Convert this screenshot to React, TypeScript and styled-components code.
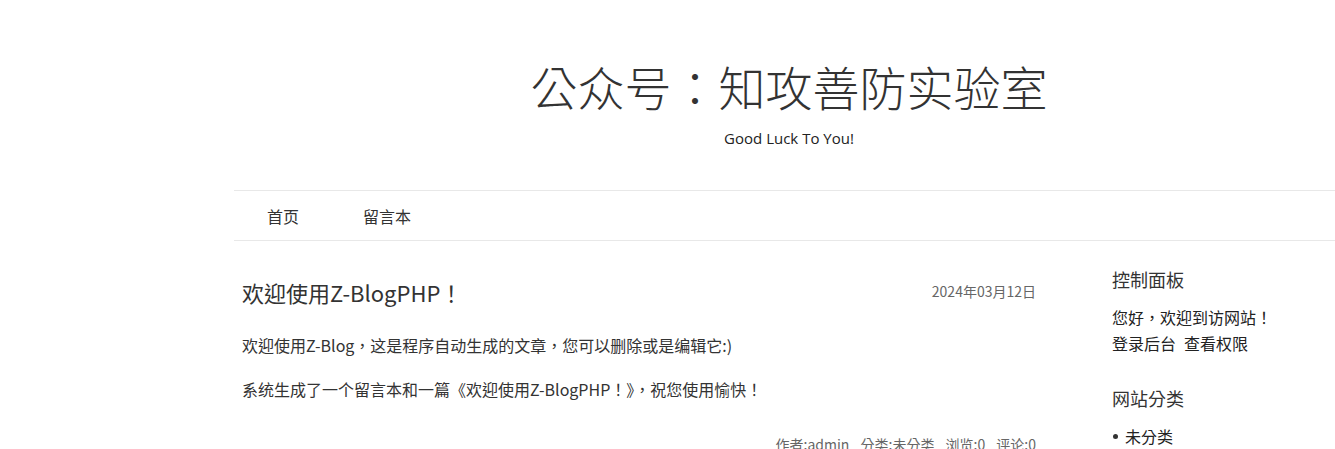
import React from "react";
import styled, { createGlobalStyle } from "styled-components";

const CJK = `"Noto Sans CJK TC", "Noto Sans CJK SC", sans-serif`;

const GlobalStyle = createGlobalStyle`
  html, body {
    margin: 0;
    padding: 0;
    background: #fff;
    overflow-x: hidden;
  }
  body {
    font-family: "Open Sans", "Noto Sans CJK TC", sans-serif;
    color: #333;
  }
`;

const Page = styled.div`
  width: 1110px;
  margin-left: 234px;
`;

const Header = styled.header`
  padding-top: 52px;
  text-align: center;
`;

const SiteTitle = styled.h1`
  margin: 0;
  font-family: ${CJK};
  font-weight: 300;
  font-size: 47px;
  line-height: 68px;
  color: #333;
`;

const Tagline = styled.div`
  margin-top: 7px;
  font-size: 15px;
  line-height: 22px;
  color: #222;
`;

const Nav = styled.nav`
  margin-top: 41px;
  display: flex;
  border-top: 1px solid #e8e8e8;
  border-bottom: 1px solid #e8e8e8;
  padding-left: 1px;
`;

const NavItem = styled.a`
  display: block;
  padding: 1px 32px 0;
  font-family: ${CJK};
  font-size: 16px;
  line-height: 48px;
  color: #333;
  text-decoration: none;
`;

const Body = styled.div`
  display: grid;
  grid-template-columns: 810px 1fr;
  column-gap: 60px;
`;

const Main = styled.main`
  padding: 35px 8px 0;
`;

const ArticleHead = styled.div`
  display: flex;
  justify-content: space-between;
  align-items: center;
`;

const ArticleTitle = styled.h2`
  margin: 0;
  font-family: ${CJK};
  font-weight: 400;
  font-size: 22px;
  line-height: 33px;
  color: #333;
`;

const ArticleDate = styled.span`
  font-family: ${CJK};
  font-size: 14px;
  color: #666;
  margin-top: -4px;
`;

const Content = styled.div`
  margin-top: 23px;
`;

const Para = styled.p`
  margin: 0 0 17px;
  font-family: ${CJK};
  font-size: 16px;
  line-height: 27px;
  color: #333;
`;

const Meta = styled.div`
  margin-top: 31px;
  text-align: right;
  font-family: ${CJK};
  font-size: 14px;
  line-height: 21px;
  color: #666;
  word-spacing: 8px;
`;

const Sidebar = styled.aside`
  padding: 25px 8px 0;
`;

const Widget = styled.section`
  margin-bottom: 29px;
`;

const WidgetTitle = styled.h3`
  margin: 0 0 11px;
  font-family: ${CJK};
  font-weight: 400;
  font-size: 18px;
  line-height: 27px;
  color: #333;
`;

const WidgetText = styled.div`
  font-family: ${CJK};
  font-size: 16px;
  line-height: 26px;
  color: #222;
`;

const LinkRow = styled.div`
  display: flex;
  gap: 8px;
`;

const List = styled.ul`
  margin: 0;
  padding: 0;
  list-style: none;
`;

const ListItem = styled.li`
  display: flex;
  align-items: center;
  gap: 7px;
  font-family: ${CJK};
  font-size: 16px;
  line-height: 26px;
  color: #222;
  &::before {
    content: "";
    width: 5px;
    height: 5px;
    border-radius: 50%;
    background: #333;
    margin-left: 1px;
  }
`;

export default function App() {
  return (
    <>
      <GlobalStyle />
      <Page>
        <Header>
          <SiteTitle>公众号：知攻善防实验室</SiteTitle>
          <Tagline>Good Luck To You!</Tagline>
        </Header>
        <Nav>
          <NavItem href="#">首页</NavItem>
          <NavItem href="#">留言本</NavItem>
        </Nav>
        <Body>
          <Main>
            <article>
              <ArticleHead>
                <ArticleTitle>欢迎使用Z-BlogPHP！</ArticleTitle>
                <ArticleDate>2024年03月12日</ArticleDate>
              </ArticleHead>
              <Content>
                <Para>欢迎使用Z-Blog，这是程序自动生成的文章，您可以删除或是编辑它:)</Para>
                <Para>系统生成了一个留言本和一篇《欢迎使用Z-BlogPHP！》，祝您使用愉快！</Para>
              </Content>
              <Meta>作者:admin 分类:未分类 浏览:0 评论:0</Meta>
            </article>
          </Main>
          <Sidebar>
            <Widget>
              <WidgetTitle>控制面板</WidgetTitle>
              <WidgetText>您好，欢迎到访网站！</WidgetText>
              <LinkRow>
                <WidgetText>登录后台</WidgetText>
                <WidgetText>查看权限</WidgetText>
              </LinkRow>
            </Widget>
            <Widget>
              <WidgetTitle>网站分类</WidgetTitle>
              <List>
                <ListItem>未分类</ListItem>
              </List>
            </Widget>
          </Sidebar>
        </Body>
      </Page>
    </>
  );
}
